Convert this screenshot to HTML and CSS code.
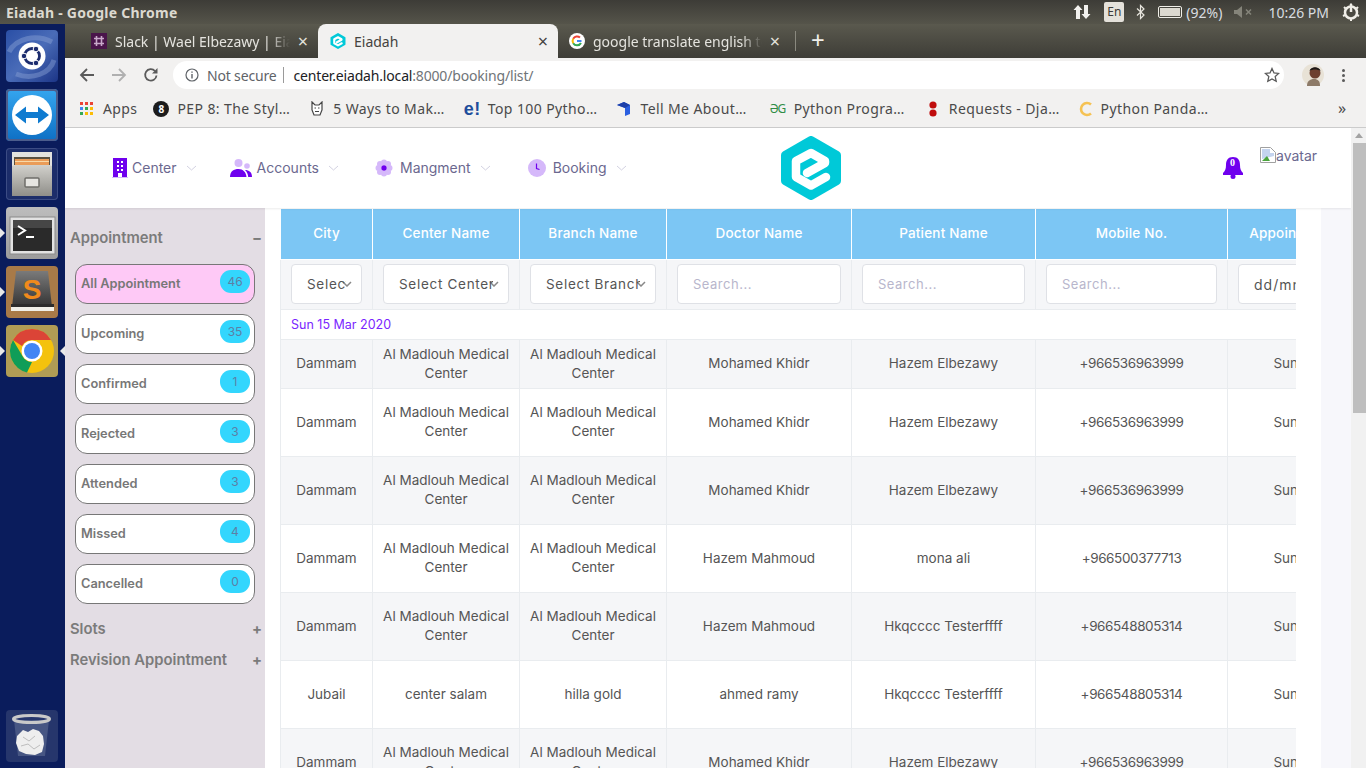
FILE: index.html
```html
<!DOCTYPE html>
<html lang="en">
<head>
    <meta charset="UTF-8">
    <title>Eiadah - Google Chrome</title>
    <link rel="stylesheet" href="styles.css">
</head>
<body>
    <!-- top panel of the desktop -->
    <div class="os-bar">
        <span class="os-title">Eiadah - Google Chrome</span>
        <div class="tray">
            <svg class="tray-net" width="18" height="16" viewBox="0 0 18 16"><path d="M5 1l4.500 5H7v9H3V6H.5zM13 15l4.500-5H15V1h-4v9H8.500z" fill="#f2f1ee"/></svg>
            <span class="tray-lang">En</span>
            <svg class="tray-bt" width="9" height="16" viewBox="0 0 9 16"><path d="M1 4.500l7 6.500-3.500 3.500V1.500L8 5 1 11.500" fill="none" stroke="#e8e6df" stroke-width="1.200"/></svg>
            <span class="tray-battery"><i></i></span>
            <span class="tray-text tray-pct">(92%)</span>
            <svg class="tray-mute" width="19" height="12" viewBox="0 0 19 12"><path d="M0 4h3l5-4v12l-5-4H0z" fill="#85847a"/><path d="M12 3.500l5 5M17 3.500l-5 5" stroke="#85847a" stroke-width="1.500"/></svg>
            <span class="tray-text tray-clock">10:26 PM</span>
            <svg class="tray-gear" width="18" height="18" viewBox="0 0 18 18"><circle cx="9" cy="9.500" r="6" fill="none" stroke="#f0eee8" stroke-width="2.500"/><path d="M9 1v8" stroke="#f0eee8" stroke-width="2.500"/><path d="M9 .5v2M2 4l1.500 1.500M16 4l-1.500 1.500M1 13l2-1M17 13l-2-1M9 16v2" stroke="#f0eee8" stroke-width="2"/></svg>
        </div>
    </div>

    <div class="desk">
        <!-- launcher -->
        <div class="launcher">
            <div class="tile tile-ubuntu">
                <svg width="52" height="52" viewBox="0 0 52 52"><path d="M3 22C10 8 30 4 46 12M48 30C44 44 26 50 10 44" fill="none" stroke="#8aa2d4" stroke-width="5" stroke-opacity=".45"/><circle cx="26" cy="26" r="13.500" fill="#fff"/><circle cx="26" cy="26" r="7.500" fill="none" stroke="#1c2c6e" stroke-width="2.800"/><circle cx="18" cy="26" r="2.800" fill="#1c2c6e" stroke="#fff"/><circle cx="30" cy="19" r="2.800" fill="#1c2c6e" stroke="#fff"/><circle cx="30" cy="33" r="2.800" fill="#1c2c6e" stroke="#fff"/></svg>
            </div>
            <div class="tile tile-tv">
                <svg width="52" height="52" viewBox="0 0 52 52"><circle cx="26" cy="26" r="20" fill="#fff"/><path d="M9 26l11-8.500v5.500h12v-5.500L43 26l-11 8.500V29H20v5.500z" fill="#0f7bd0"/></svg>
            </div>
            <div class="tile tile-files">
                <svg width="52" height="52" viewBox="0 0 52 52"><defs><linearGradient id="cabinet" x1="0" y1="0" x2="0" y2="1"><stop offset="0" stop-color="#d2d1cc"/><stop offset="1" stop-color="#8f8e89"/></linearGradient></defs><path d="M6 4h40v14H6z" fill="#e3e2de"/><path d="M8 9h36v8H8z" fill="#5a5040"/><path d="M9 11h34v6H9z" fill="#ea9c58"/><path d="M9 13h34v1H9z" fill="#f8d9a8"/><path d="M6 18l3-1h34l3 1v30H6z" fill="url(#cabinet)"/><rect x="19" y="30" width="14" height="9" rx="1" fill="#e6e5e1" stroke="#6f6e69" stroke-width="1.500"/></svg>
            </div>
            <div class="tile tile-term has-pip">
                <svg width="52" height="52" viewBox="0 0 52 52"><rect x="4" y="10" width="45" height="37" fill="#e2e2e2" stroke="#8a8a8a"/><rect x="7" y="13" width="39" height="31" fill="#2a2a2a"/><path d="M7 13h39v8H7z" fill="#464646"/><path d="M12 19l7 4.500-7 4.500" fill="none" stroke="#fff" stroke-width="2"/><path d="M20 30h8" stroke="#fff" stroke-width="2"/></svg>
            </div>
            <div class="tile tile-sublime has-pip">
                <svg width="52" height="52" viewBox="0 0 52 52"><defs><linearGradient id="subl" x1="0" y1="0" x2="0" y2="1"><stop offset="0" stop-color="#7a7a7a"/><stop offset="1" stop-color="#333"/></linearGradient></defs><path d="M10 5h32l4 36H6z" fill="url(#subl)"/><path d="M5 40h43v5H5z" fill="#f0efe8"/><path d="M5 38h43v3H5z" fill="#2c2c2c"/><text x="26" y="33" text-anchor="middle" class="sublime-s">S</text></svg>
            </div>
            <div class="tile tile-chrome has-pip pip-right">
                <svg width="52" height="52" viewBox="0 0 52 52"><circle cx="26" cy="26" r="22" fill="#f4c20d"/><path d="M26 4a22 22 0 0 1 19 11H26a11 11 0 0 0-10 6L7 15A22 22 0 0 1 26 4z" fill="#db4437"/><path d="M7 15l10 17a11 11 0 0 0 9 5l-5 10.500A22 22 0 0 1 7 15z" fill="#0f9d58"/><circle cx="26" cy="26" r="10.500" fill="#fff"/><circle cx="26" cy="26" r="8" fill="#4285f4"/></svg>
            </div>
            <div class="tile tile-trash">
                <svg width="52" height="52" viewBox="0 0 52 52"><path d="M8 10l4 36h27l4-36z" fill="#5d6d92" fill-opacity=".6"/><ellipse cx="25.500" cy="9" rx="18" ry="3.500" fill="none" stroke="#c9c9c9" stroke-width="3"/><path d="M11 26l6-6 5 2 5-3 6 2 4 5 1 8-2 8-7 3-9-1-7-3-3-8z" fill="#eeeeee"/><path d="M17 27l6 4 6-5M15 36l7-2 6 5 6-4" fill="none" stroke="#bdbdbd"/></svg>
            </div>
        </div>

        <div class="browser">
            <div class="tabs">
                <div class="tab tab-slack">
                    <svg width="16" height="16" viewBox="0 0 16 16"><rect width="16" height="16" fill="#4a154b"/><path d="M5.500 3v10M10.500 3v10M3 5.500h10M3 10.500h10" stroke="#c9a9cb" stroke-width="1.600"/></svg>
                    <span class="tab-label">Slack | Wael Elbezawy | Eiadah Workspace</span>
                    <span class="tab-close">×</span>
                </div>
                <div class="tab tab-active">
                    <svg width="16" height="16" viewBox="0 0 60 64"><path d="M30 4L56 19V45L30 60 4 45V19z" fill="#00c9d8" stroke="#00c9d8" stroke-width="8" stroke-linejoin="round"/><path d="M45 41L30 49.500 15 41V25L30 17 44 25V27L26 37" fill="none" stroke="#fff" stroke-width="8.500" stroke-linecap="round" stroke-linejoin="round"/></svg>
                    <span class="tab-label">Eiadah</span>
                    <span class="tab-close">×</span>
                </div>
                <div class="tab tab-google">
                    <svg width="16" height="16" viewBox="0 0 16 16"><circle cx="8" cy="8" r="8" fill="#fff"/><path d="M12.500 8H8" stroke="#4285f4" stroke-width="2"/><path d="M11 4.500A4.500 4.500 0 0 0 4.200 5.800" fill="none" stroke="#ea4335" stroke-width="2"/><path d="M4.200 5.800a4.500 4.500 0 0 0 0 4.400" fill="none" stroke="#fbbc05" stroke-width="2"/><path d="M4.200 10.200A4.500 4.500 0 0 0 12 10" fill="none" stroke="#34a853" stroke-width="2"/></svg>
                    <span class="tab-label">google translate english to arabic</span>
                    <span class="tab-close">×</span>
                </div>
                <span class="tab-sep"></span>
                <span class="tab-new">+</span>
            </div>

            <div class="toolbar">
                <svg class="tb-btn tb-back" width="16" height="16" viewBox="0 0 16 16"><path d="M15 8H2M8 2L2 8l6 6" fill="none" stroke="#5a5a5a" stroke-width="1.800"/></svg>
                <svg class="tb-btn tb-fwd" width="16" height="16" viewBox="0 0 16 16"><path d="M1 8h13M8 2l6 6-6 6" fill="none" stroke="#b0b0b0" stroke-width="1.800"/></svg>
                <svg class="tb-btn tb-reload" width="16" height="16" viewBox="0 0 16 16"><path d="M13.500 8.500A5.700 5.700 0 1 1 12 4" fill="none" stroke="#5a5a5a" stroke-width="1.800"/><path d="M14.500 1v5.500H9z" fill="#5a5a5a"/></svg>
                <div class="omnibox">
                    <svg width="14" height="14" viewBox="0 0 14 14"><circle cx="7" cy="7" r="6" fill="none" stroke="#5f6368" stroke-width="1.200"/><path d="M7 6v4.500M7 3.500v1.300" stroke="#5f6368" stroke-width="1.400"/></svg>
                    <span class="omni-state">Not secure</span>
                    <span class="omni-sep"></span>
                    <span class="omni-url"><b>center.eiadah.local</b>:8000/booking/list/</span>
                    <svg class="omni-star" width="16" height="16" viewBox="0 0 16 16"><path d="M8 1.500l2 4.400 4.700.5-3.500 3.200 1 4.700L8 11.900l-4.200 2.400 1-4.700L1.300 6.400 6 5.900z" fill="none" stroke="#5a5a5a" stroke-width="1.300"/></svg>
                </div>
                <svg class="tb-avatar" width="22" height="22" viewBox="0 0 22 22"><circle cx="11" cy="11" r="11" fill="#e8e2d6"/><path d="M5 22c0-5 3-7 7-7s6 2 6 7z" fill="#8d7a68"/><circle cx="13" cy="9" r="5.500" fill="#6d4030"/><path d="M7.500 7c1-5 10-5 11 0-3-2-8-2-11 0z" fill="#1f1a18"/></svg>
                <span class="tb-menu"><i></i><i></i><i></i></span>
            </div>

            <div class="bookmarks">
                <a class="bm bm-apps">
                    <svg width="14" height="14" viewBox="0 0 14 14"><path d="M0 0h3v3H0z" fill="#ea4335"/><path d="M5 0h3v3H5z" fill="#ea4335"/><path d="M10 0h3v3h-3z" fill="#ea4335"/><path d="M0 5h3v3H0z" fill="#4285f4"/><path d="M5 5h3v3H5z" fill="#34a853"/><path d="M10 5h3v3h-3z" fill="#fbbc05"/><path d="M0 10h3v3H0z" fill="#34a853"/><path d="M5 10h3v3H5z" fill="#fbbc05"/><path d="M10 10h3v3h-3z" fill="#fbbc05"/></svg>
                    Apps
                </a>
                <a class="bm"><span class="bm-eight">8</span>PEP 8: The Styl…</a>
                <a class="bm">
                    <svg width="16" height="16" viewBox="0 0 16 16"><path d="M3 1l3 3h4l3-3v8l-2 5H5L3 9z" fill="#fff" stroke="#444" stroke-width="1.200"/><path d="M5.500 7h1.500M9 7h1.500M6 10.500h4" stroke="#444" stroke-width="1.200"/></svg>
                    5 Ways to Mak…
                </a>
                <a class="bm"><span class="bm-e">e!</span>Top 100 Pytho…</a>
                <a class="bm bm-wide">
                    <svg width="16" height="16" viewBox="0 0 16 16"><path d="M1 4l7-3 6 3v9l-5 2V7z" fill="#2a5fe0"/><path d="M1 4l7-3 6 3-5 3z" fill="#1d3fa8"/></svg>
                    Tell Me About…
                </a>
                <a class="bm bm-wide"><span class="bm-gg">ƏG</span>Python Progra…</a>
                <a class="bm bm-req">
                    <svg width="10" height="16" viewBox="0 0 10 16"><circle cx="5" cy="4" r="3.600" fill="#c00d0d"/><circle cx="5" cy="12" r="3.600" fill="#c00d0d"/></svg>
                    Requests - Dja…
                </a>
                <a class="bm">
                    <svg width="14" height="16" viewBox="0 0 14 16"><path d="M12 3.500a6 6 0 1 0 0 9" fill="none" stroke="#f5c253" stroke-width="2.600"/></svg>
                    Python Panda…
                </a>
                <span class="bm-more">»</span>
            </div>

            <div class="page">
                <div class="site">
                    <div class="site-head">
                        <nav class="nav">
                            <a class="nav-item nav-center">
                                <svg width="16" height="20" viewBox="0 0 16 20"><path d="M1 0h14v19H1z" fill="#6f00ee"/><path d="M0 19h16v1H0z" fill="#d5b8fa"/><path d="M5 3h2v2H5zM9 3h2v2H9zM5 7h2v2H5zM9 7h2v2H9zM5 11h2v2H5zM9 11h2v2H9zM6 15h4v4H6z" fill="#fff"/></svg>
                                <span>Center</span>
                                <svg class="chev" width="11" height="6" viewBox="0 0 11 6"><path d="M1 1l4.500 4L10 1" fill="none" stroke="#d3d2e2"/></svg>
                            </a>
                            <a class="nav-item nav-accounts">
                                <svg width="22" height="20" viewBox="0 0 22 20"><circle cx="8.500" cy="5" r="4" fill="#d5b8fa"/><circle cx="17" cy="8" r="2.800" fill="#d5b8fa"/><path d="M0 19c0-6 4-8 8.500-8s7.500 3 8 8z" fill="#6f00ee"/><path d="M15 12c4 0 7 2 7 7h-3.800c-.2-3-1.200-5-3.200-7z" fill="#6f00ee"/></svg>
                                <span>Accounts</span>
                                <svg class="chev" width="11" height="6" viewBox="0 0 11 6"><path d="M1 1l4.500 4L10 1" fill="none" stroke="#d3d2e2"/></svg>
                            </a>
                            <a class="nav-item nav-mang">
                                <svg width="18" height="18" viewBox="0 0 18 18"><g fill="#d5b8fa"><circle cx="9" cy="3.500" r="3"/><circle cx="9" cy="14.500" r="3"/><circle cx="3.500" cy="9" r="3"/><circle cx="14.500" cy="9" r="3"/><circle cx="5" cy="5" r="3"/><circle cx="13" cy="5" r="3"/><circle cx="5" cy="13" r="3"/><circle cx="13" cy="13" r="3"/></g><circle cx="9" cy="9" r="2.700" fill="#6f00ee"/></svg>
                                <span>Mangment</span>
                                <svg class="chev" width="11" height="6" viewBox="0 0 11 6"><path d="M1 1l4.500 4L10 1" fill="none" stroke="#d3d2e2"/></svg>
                            </a>
                            <a class="nav-item nav-booking">
                                <svg width="18" height="18" viewBox="0 0 18 18"><circle cx="9" cy="9" r="9" fill="#d5b8fa"/><path d="M8.500 4.500v5l3 1" fill="none" stroke="#6f00ee" stroke-width="1.200"/></svg>
                                <span>Booking</span>
                                <svg class="chev" width="11" height="6" viewBox="0 0 11 6"><path d="M1 1l4.500 4L10 1" fill="none" stroke="#d3d2e2"/></svg>
                            </a>
                        </nav>
                        <svg class="logo" width="60" height="64" viewBox="0 0 60 64"><path d="M30 4L56 19V45L30 60 4 45V19z" fill="#00c9d8" stroke="#00c9d8" stroke-width="8" stroke-linejoin="round"/><path d="M45 41L30 49.500 15 41V25L30 17 44 25V27L26 37" fill="none" stroke="#fff" stroke-width="8.500" stroke-linecap="round" stroke-linejoin="round"/></svg>
                        <div class="head-right">
                            <span class="bell">
                                <svg width="22" height="23" viewBox="0 0 22 23"><path d="M11 1c5 0 7 3.500 7 8 0 4 1 6 3 8v2H1v-2c2-2 3-4 3-8 0-4.500 2-8 7-8z" fill="#6f00ee"/><circle cx="11" cy="20.500" r="2.500" fill="#6f00ee"/></svg>
                                <span class="bell-count">0</span>
                            </span>
                            <span class="avatar">
                                <svg width="16" height="16" viewBox="0 0 16 16"><path d="M.5.500h10l5 5v10H.5z" fill="#fff" stroke="#a0a0a0"/><path d="M2 2h8v4h4v3l-12 3z" fill="#c4d4ef"/><path d="M2 14l5-5 3 5z" fill="#4aa53c"/></svg>
                                avatar
                            </span>
                        </div>
                    </div>

                    <div class="site-body">
                        <aside class="sidebar">
                            <div class="side-head side-head-open"><span>Appointment</span><span class="side-sign">−</span></div>
                            <ul class="status-list">
                                <li class="status status-active"><span>All Appointment</span><span class="count">46</span></li>
                                <li class="status"><span>Upcoming</span><span class="count">35</span></li>
                                <li class="status"><span>Confirmed</span><span class="count">1</span></li>
                                <li class="status"><span>Rejected</span><span class="count">3</span></li>
                                <li class="status"><span>Attended</span><span class="count">3</span></li>
                                <li class="status"><span>Missed</span><span class="count">4</span></li>
                                <li class="status"><span>Cancelled</span><span class="count">0</span></li>
                            </ul>
                            <div class="side-head"><span>Slots</span><span class="side-sign">+</span></div>
                            <div class="side-head"><span>Revision Appointment</span><span class="side-sign">+</span></div>
                        </aside>

                        <main class="content">
                            <div class="card">
                                <div class="table-wrap">
                                    <table class="bookings">
                                        <thead>
                                            <tr>
                                                <th class="col-city">City</th>
                                                <th class="col-center">Center Name</th>
                                                <th class="col-branch">Branch Name</th>
                                                <th class="col-doctor">Doctor Name</th>
                                                <th class="col-patient">Patient Name</th>
                                                <th class="col-mobile">Mobile No.</th>
                                                <th class="col-date">Appointment Date Time</th>
                                            </tr>
                                        </thead>
                                        <tbody>
                                            <tr class="filters">
                                                <td><select class="field"><option>Select City</option></select></td>
                                                <td><select class="field"><option>Select Center</option></select></td>
                                                <td><select class="field"><option>Select Branch</option></select></td>
                                                <td><input class="field" placeholder="Search..."></td>
                                                <td><input class="field" placeholder="Search..."></td>
                                                <td><input class="field" placeholder="Search..."></td>
                                                <td><input class="field field-date" value="dd/mm/yyyy"></td>
                                            </tr>
                                            <tr class="date-row"><td colspan="7">Sun 15 Mar 2020</td></tr>
                                            <tr class="row-first shade">
                                                <td>Dammam</td><td>Al Madlouh Medical Center</td><td>Al Madlouh Medical Center</td><td>Mohamed Khidr</td><td>Hazem Elbezawy</td><td>+966536963999</td><td class="cut">Sun 15 Mar 2020</td>
                                            </tr>
                                            <tr>
                                                <td>Dammam</td><td>Al Madlouh Medical Center</td><td>Al Madlouh Medical Center</td><td>Mohamed Khidr</td><td>Hazem Elbezawy</td><td>+966536963999</td><td class="cut">Sun 15 Mar 2020</td>
                                            </tr>
                                            <tr class="shade">
                                                <td>Dammam</td><td>Al Madlouh Medical Center</td><td>Al Madlouh Medical Center</td><td>Mohamed Khidr</td><td>Hazem Elbezawy</td><td>+966536963999</td><td class="cut">Sun 15 Mar 2020</td>
                                            </tr>
                                            <tr>
                                                <td>Dammam</td><td>Al Madlouh Medical Center</td><td>Al Madlouh Medical Center</td><td>Hazem Mahmoud</td><td>mona ali</td><td>+966500377713</td><td class="cut">Sun 15 Mar 2020</td>
                                            </tr>
                                            <tr class="shade">
                                                <td>Dammam</td><td>Al Madlouh Medical Center</td><td>Al Madlouh Medical Center</td><td>Hazem Mahmoud</td><td>Hkqcccc Testerffff</td><td>+966548805314</td><td class="cut">Sun 15 Mar 2020</td>
                                            </tr>
                                            <tr>
                                                <td>Jubail</td><td>center salam</td><td>hilla gold</td><td>ahmed ramy</td><td>Hkqcccc Testerffff</td><td>+966548805314</td><td class="cut">Sun 15 Mar 2020</td>
                                            </tr>
                                            <tr class="shade">
                                                <td>Dammam</td><td>Al Madlouh Medical Center</td><td>Al Madlouh Medical Center</td><td>Mohamed Khidr</td><td>Hazem Elbezawy</td><td>+966536963999</td><td class="cut">Sun 15 Mar 2020</td>
                                            </tr>
                                        </tbody>
                                    </table>
                                </div>
                            </div>
                        </main>
                    </div>
                </div>

                <div class="scrollbar">
                    <span class="scroll-up"></span>
                    <span class="scroll-thumb"></span>
                </div>
            </div>
        </div>
    </div>
</body>
</html>
```

FILE: styles.css
```css
* {
    box-sizing: border-box;
    margin: 0;
    padding: 0;
}

body {
    width: 1366px;
    height: 768px;
    overflow: hidden;
    font-family: 'Noto Sans', sans-serif;
    background: #fff;
}

svg {
    display: block;
    flex-shrink: 0;
}

/* desktop panel */
.os-bar {
    height: 24px;
    display: flex;
    align-items: center;
    justify-content: space-between;
    padding: 0 6px;
    background: linear-gradient(180deg, #3d3c37 0%, #55544a 100%);
}

.os-title {
    font-size: 14px;
    font-weight: 700;
    letter-spacing: .25px;
    color: #dcd9d0;
}

.tray {
    display: flex;
    align-items: center;
}

.tray-text {
    font-size: 14px;
    color: #d9dde0;
}

.tray-lang {
    width: 20px;
    height: 20px;
    margin-left: 13px;
    background: #e4e1da;
    border-radius: 2px;
    color: #3c3b37;
    font-size: 12px;
    line-height: 20px;
    text-align: center;
}

.tray-bt {
    margin-left: 12px;
}

.tray-battery {
    width: 24px;
    height: 12px;
    margin-left: 13px;
    border: 1px solid #f0eee8;
    border-radius: 2px;
    padding: 1px;
}

.tray-battery i {
    display: block;
    width: 100%;
    height: 100%;
    background: #dcd9d0;
}

.tray-pct {
    margin-left: 4px;
}

.tray-mute {
    margin-left: 12px;
}

.tray-clock {
    margin-left: 15px;
}

.tray-gear {
    margin-left: 13px;
}

.desk {
    display: flex;
    height: 744px;
}

/* launcher */
.launcher {
    width: 65px;
    background: #0a1c5c;
    display: flex;
    flex-direction: column;
    gap: 7px;
    padding: 6px;
    flex-shrink: 0;
}

.tile {
    position: relative;
    width: 52px;
    height: 52px;
    border-radius: 4px;
    flex-shrink: 0;
}

.tile-ubuntu {
    background: linear-gradient(135deg, #2a4fa6 0%, #4a6cb8 50%, #1c3587 100%);
}

.tile-tv {
    background: linear-gradient(180deg, #35a6ef 0%, #0e6fc4 100%);
    box-shadow: inset 0 0 0 2px #4c5d8c;
}

.tile-files {
    background: #1c2d6a;
    box-shadow: inset 0 0 0 1px #3c4c84;
}

.tile-term {
    background: linear-gradient(180deg, #bdbdbd 0%, #9c9c9c 100%);
}

.tile-sublime {
    background: #a87a48;
}

.tile-chrome {
    background: #b09c55;
}

.tile-trash {
    margin-top: auto;
    background: #26366c;
}

.sublime-s {
    font-family: 'Liberation Sans', sans-serif;
    font-size: 28px;
    font-weight: 700;
    fill: #f08a1c;
}

.has-pip::before {
    content: '';
    position: absolute;
    left: -6px;
    top: 21px;
    border-left: 5px solid #e8e8e8;
    border-top: 5px solid transparent;
    border-bottom: 5px solid transparent;
}

.pip-right::after {
    content: '';
    position: absolute;
    right: -7px;
    top: 21px;
    border-right: 5px solid #e8e8e8;
    border-top: 5px solid transparent;
    border-bottom: 5px solid transparent;
}

/* browser frame */
.browser {
    flex: 1;
    display: flex;
    flex-direction: column;
    min-width: 0;
}

.tabs {
    height: 34px;
    display: flex;
    align-items: stretch;
    padding-left: 26px;
    background: linear-gradient(180deg, #5a594e 0%, #3e3d37 100%);
    color: #e4e3de;
    font-size: 14px;
}

.tab {
    display: flex;
    align-items: center;
    gap: 8px;
    padding: 0 10px;
    height: 34px;
}

.tab-slack {
    width: 227px;
    padding-left: 0;
}

.tab-active {
    width: 240px;
    background: #f2f1f0;
    color: #45433f;
    border-radius: 8px 8px 0 0;
    padding-left: 12px;
}

.tab-google {
    width: 232px;
    padding-left: 11px;
}

.tab-label {
    flex: 1;
    white-space: nowrap;
    overflow: hidden;
    -webkit-mask-image: linear-gradient(90deg, #000 88%, transparent 100%);
    mask-image: linear-gradient(90deg, #000 88%, transparent 100%);
}

.tab-active .tab-label {
    -webkit-mask-image: none;
    mask-image: none;
}

.tab-close {
    font-size: 18px;
    line-height: 1;
}

.tab-sep {
    width: 1px;
    height: 20px;
    margin: 7px 0 0 5px;
    background: #8a897f;
}

.tab-new {
    margin-left: 15px;
    font-size: 24px;
    line-height: 32px;
    color: #f0efea;
}

.toolbar {
    height: 34px;
    display: flex;
    align-items: center;
    background: #f2f1f0;
}

.tb-back {
    margin-left: 14px;
}

.tb-fwd {
    margin-left: 16px;
}

.tb-reload {
    margin-left: 16px;
}

.omnibox {
    width: 1111px;
    height: 28px;
    margin-left: 14px;
    padding: 0 4px 0 12px;
    display: flex;
    align-items: center;
    background: #fff;
    border-radius: 14px;
    font-size: 14px;
    letter-spacing: -.17px;
}

.omni-state {
    margin-left: 8px;
    color: #5f6368;
}

.omni-sep {
    width: 1px;
    height: 16px;
    margin: 0 9px 0 7px;
    background: #9a9a9a;
}

.omni-url {
    flex: 1;
    color: #6f7478;
}

.omni-url b {
    font-weight: 400;
    color: #202124;
}

.tb-avatar {
    margin-left: 18px;
}

.tb-menu {
    display: flex;
    flex-direction: column;
    gap: 2px;
    margin-left: 18px;
}

.tb-menu i {
    display: block;
    width: 3px;
    height: 3px;
    border-radius: 50%;
    background: #5a5a5a;
}

.bookmarks {
    height: 36px;
    display: flex;
    align-items: center;
    padding-left: 15px;
    padding-bottom: 2px;
    background: #f2f1f0;
    border-bottom: 1px solid #ccc;
    font-size: 14px;
    letter-spacing: .4px;
    color: #4a4a4a;
}

.bm {
    display: flex;
    align-items: center;
    gap: 8px;
    padding-right: 19px;
    white-space: nowrap;
}

.bm-apps {
    gap: 9px;
    padding-right: 16px;
}

.bm-wide {
    padding-right: 23px;
}

.bm-req {
    gap: 11px;
}

.bm-eight {
    width: 16px;
    height: 16px;
    border-radius: 50%;
    background: #1c1c1c;
    color: #fff;
    font-size: 10px;
    font-weight: 700;
    line-height: 16px;
    text-align: center;
}

.bm-e {
    width: 16px;
    font-size: 18px;
    font-weight: 700;
    line-height: 16px;
    color: #1f4e9c;
    font-family: 'Liberation Sans', sans-serif;
}

.bm-gg {
    width: 16px;
    font-size: 12px;
    letter-spacing: -1px;
    color: #2f8d46;
}

.bm-more {
    position: absolute;
    left: 1338px;
    top: 98px;
    font-size: 16px;
    line-height: 20px;
    color: #4a4a4a;
}

/* page inside the browser */
.page {
    flex: 1;
    display: flex;
    min-height: 0;
}

.site {
    width: 1286px;
    display: flex;
    flex-direction: column;
    font-family: Inter, sans-serif;
}

.scrollbar {
    width: 15px;
    background: #f1f1f1;
    position: relative;
    padding: 15px 0 0 2px;
}

.scroll-up {
    position: absolute;
    top: 5px;
    left: 4px;
    border-bottom: 5px solid #a3a3a3;
    border-left: 4px solid transparent;
    border-right: 4px solid transparent;
}

.scroll-thumb {
    display: block;
    height: 270px;
    background: #bebebe;
}

.site-head {
    height: 80px;
    display: flex;
    flex-shrink: 0;
    padding-left: 47px;
    background: #fff;
    box-shadow: 0 1px 2px rgba(0, 0, 0, 0.08);
    position: relative;
}

.nav {
    width: 669px;
    display: flex;
    align-items: center;
    padding-bottom: 1px;
}

.nav-item {
    display: flex;
    align-items: center;
    font-size: 14px;
    font-weight: 400;
    color: #6b688f;
}

.nav-item span {
    margin-left: 4px;
}

.nav-item .chev {
    margin-left: 9px;
}

.nav-accounts {
    margin-left: 33px;
}

.nav-accounts span {
    margin-left: 5px;
}

.nav-mang {
    margin-left: 36px;
}

.nav-mang span {
    margin-left: 7px;
}

.nav-booking {
    margin-left: 37px;
}

.nav-booking span {
    margin-left: 7px;
}

.logo {
    margin-top: 8px;
}

.head-right {
    display: flex;
    margin-left: 381px;
    padding-top: 19px;
}

.bell {
    position: relative;
    height: 23px;
    margin-top: 9px;
}

.bell-count {
    position: absolute;
    top: 1px;
    left: 8px;
    font-family: 'Liberation Serif', serif;
    font-size: 10px;
    font-weight: 700;
    color: #fff;
}

.avatar {
    display: flex;
    align-items: flex-start;
    margin-left: 16px;
    font-size: 14px;
    line-height: 18px;
    color: #6b688f;
}

.site-body {
    flex: 1;
    display: flex;
    min-height: 0;
}

/* left menu */
.sidebar {
    width: 200px;
    flex-shrink: 0;
    padding: 15px 3px 0 5px;
    background: #e3dde4;
}

.side-head {
    display: flex;
    justify-content: space-between;
    height: 31px;
    line-height: 31px;
    font-size: 14.800px;
    font-weight: 600;
    color: #7b7b7b;
}

.side-head-open {
    margin-bottom: 10px;
}

.side-sign {
    font-weight: 700;
}

.status-list {
    list-style: none;
    display: flex;
    flex-direction: column;
    gap: 10px;
    margin: 0 7px 10px 5px;
}

.status {
    height: 40px;
    display: flex;
    justify-content: space-between;
    padding: 5px 4px 0 5px;
    background: #fff;
    border: 1px solid #777;
    border-radius: 12px;
    font-size: 12.800px;
    font-weight: 600;
    color: #777;
    line-height: 27px;
}

.status-active {
    background: #fec9f6;
}

.count {
    width: 30px;
    height: 23px;
    background: #33d6fd;
    border-radius: 11px;
    font-weight: 400;
    font-size: 12px;
    line-height: 23px;
    text-align: center;
    color: #5d7fa6;
}

/* table area */
.content {
    flex: 1;
    min-width: 0;
    background: #f7f7fb;
}

.card {
    width: 1056px;
    height: 100%;
    padding: 1px 0 0 15px;
    background: #fff;
}

.table-wrap {
    width: 1016px;
    overflow: hidden;
}

.bookings {
    width: 1147px;
    table-layout: fixed;
    border-collapse: collapse;
    font-size: 13.500px;
    color: #555;
}

.col-city { width: 92px; }
.col-center { width: 147px; }
.col-branch { width: 147px; }
.col-doctor { width: 185px; }
.col-patient { width: 184px; }
.col-mobile { width: 192px; }
.col-date { width: 200px; }

.bookings th {
    height: 50px;
    padding-bottom: 2px;
    background: #7cc6f4;
    border: 1px solid #fff;
    border-top: 0;
    color: #fff;
    font-weight: 500;
    letter-spacing: .2px;
    text-align: center;
    white-space: nowrap;
}

.bookings td {
    height: 68px;
    padding: 0 10px;
    border: 1px solid #e9ecef;
    line-height: 19px;
    text-align: center;
}

.bookings td:nth-child(6) {
    letter-spacing: -.4px;
}

.bookings td.cut {
    white-space: nowrap;
}

.shade td {
    background: #f5f6f8;
}

.bookings .row-first td {
    height: 49px;
}

.bookings .filters td {
    height: 50px;
    background: #f5f6f8;
    letter-spacing: 0;
}

.field {
    display: block;
    width: 100%;
    height: 40px;
    padding: 0 15px;
    background-color: #fff;
    border: 1px solid #dfe1e6;
    border-radius: 4px;
    font-family: Inter, sans-serif;
    font-size: 13px;
    color: #555;
    letter-spacing: .5px;
    appearance: none;
    -webkit-appearance: none;
}

select.field {
    font-size: 13.500px;
    letter-spacing: .7px;
    background-image: url("data:image/svg+xml,%3Csvg xmlns='http://www.w3.org/2000/svg' width='10' height='6'%3E%3Cpath d='M1 1l4 4 4-4' fill='none' stroke='%23888' stroke-width='1.500'/%3E%3C/svg%3E");
    background-repeat: no-repeat;
    background-position: right 9px center;
}

.field-date {
    font-size: 14px;
    letter-spacing: 1px;
}

.field::placeholder {
    color: #b8b6cc;
}

.bookings .date-row td {
    height: 30px;
    text-align: left;
    color: #7a26ff;
    font-size: 12.500px;
}
```
